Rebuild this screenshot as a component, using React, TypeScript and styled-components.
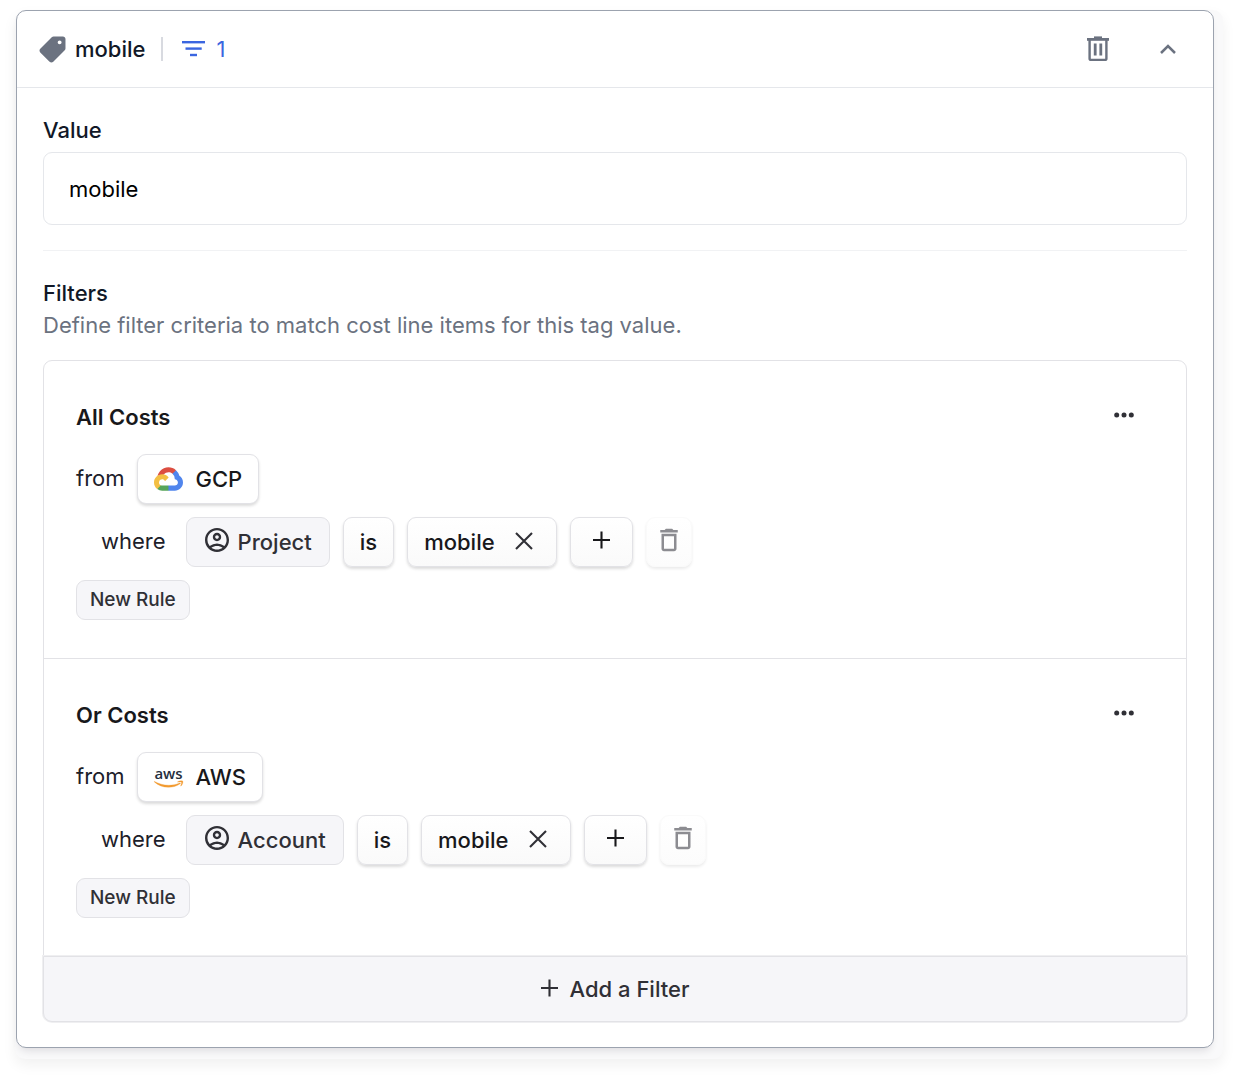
import React, { useState } from "react";
import styled, { createGlobalStyle, css } from "styled-components";

const GlobalStyle = createGlobalStyle`
  *, *::before, *::after { box-sizing: border-box; }
  body {
    margin: 0;
    background: #fff;
    font-family: Inter, "Liberation Sans", sans-serif;
    font-size: 22px;
    line-height: 32px;
    color: #1c2029;
  }
  button, input { font: inherit; color: inherit; }
  svg { display: block; flex: none; overflow: visible; }
`;

const Page = styled.main`
  padding: 10px 15px 20px;
`;

const Backdrop = styled.div`
  padding: 0 9px 11px 1px;
  border-radius: 10px;
  background: #f9f9fa;
  box-shadow: 0 6px 14px rgba(0, 0, 0, 0.06);
`;

const Card = styled.section`
  border: 1px solid #9ca3af;
  border-radius: 10px;
  background: #fff;
  box-shadow: 0 6px 8px -4px rgba(30, 20, 40, 0.14);
`;

const Header = styled.header`
  display: flex;
  align-items: center;
  height: 77px;
  padding: 0 37px 0 22px;
  border-bottom: 1px solid #e5e7eb;
  color: #6b7280;
`;

const HeaderTitle = styled.h2`
  margin: 0 16px 0 9px;
  font-size: inherit;
  font-weight: 500;
  color: #111827;
`;

const FilterCount = styled.span`
  display: flex;
  align-items: center;
  gap: 11px;
  height: 24px;
  padding-left: 19px;
  border-left: 2px solid #d8dae0;
  color: #3b66e0;
`;

const HeaderActions = styled.div`
  display: flex;
  gap: 51px;
  margin-left: auto;
`;

const PlainButton = styled.button`
  display: flex;
  align-items: center;
  justify-content: center;
  padding: 0;
  border: 0;
  background: none;
  cursor: pointer;
`;

const Body = styled.div`
  padding: 26px 26px 25px;
`;

const FieldLabel = styled.label`
  display: block;
  margin-bottom: 6px;
  font-weight: 500;
  color: #111827;
`;

const TextInput = styled.input`
  display: block;
  width: 100%;
  height: 73px;
  padding: 0 25px;
  border: 1px solid #e5e7eb;
  border-radius: 9px;
  background: #fff;
  color: #000;
  outline: 0;
`;

const Divider = styled.hr`
  margin: 25px 0 26px;
  border: 0;
  border-top: 1px solid #f1f2f4;
`;

const SectionTitle = styled.h3`
  margin: 0;
  font-size: inherit;
  font-weight: 500;
  color: #111827;
`;

const Description = styled.p`
  margin: 0 0 19px;
  color: #6b7280;
`;

const FilterBox = styled.div`
  border: 1px solid #e2e2e6;
  border-radius: 9px;
`;

const Group = styled.section`
  display: flex;
  flex-direction: column;
  align-items: flex-start;
  gap: 13px;
  padding: 40px 32px 38px;

  & + & {
    border-top: 1px solid #e2e2e6;
  }
`;

const GroupHeader = styled.div`
  display: flex;
  justify-content: space-between;
  align-items: flex-start;
  width: 100%;
  margin-bottom: 8px;
  padding-right: 20px;
`;

const MenuButton = styled(PlainButton)`
  height: 28px;
`;

const GroupTitle = styled.h4`
  margin: 0;
  font-size: inherit;
  font-weight: 600;
  color: #18181b;
`;

const RuleRow = styled.div<{ $indent?: boolean }>`
  display: flex;
  align-items: center;
  gap: ${(p) => (p.$indent ? 13 : 12)}px;
  padding-left: ${(p) => (p.$indent ? 25 : 0)}px;
`;

const Keyword = styled.span<{ $wide?: boolean }>`
  padding-bottom: 2px;
  margin-right: ${(p) => (p.$wide ? 7 : 0)}px;
`;

const variants = {
  source: css`
    background: #fff;
    border-color: #e2e2e6;
    box-shadow: 0 2px 3px rgba(0, 0, 0, 0.14);
    gap: 13px;
  `,
  muted: css`
    background: #f6f6f9;
    border-color: #e2e2e6;
    color: #303036;
    gap: 8px;
    padding: 0 17px;
  `,
  raised: css`
    background: linear-gradient(#fff, #fafafa);
    border-color: #e2e2e6;
    box-shadow: 0 2px 3px rgba(0, 0, 0, 0.14);
    gap: 19px;
  `,
  ghost: css`
    background: linear-gradient(#fff, #fcfcfc);
    border-color: #fafafa;
    box-shadow: 0 2px 3px rgba(0, 0, 0, 0.08);
    color: #8c8c91;
    padding: 0 7px;
  `,
};

const Chip = styled.button<{ $variant: keyof typeof variants }>`
  display: flex;
  align-items: center;
  height: 50px;
  padding: 0 16px;
  border: 1px solid;
  border-radius: 9px;
  font-weight: 500;
  color: #18181b;
  cursor: pointer;
  ${(p) => variants[p.$variant]}
`;

const ValueChip = styled(Chip)`
  padding-right: 22px;
`;

const AddValue = styled(Chip)`
  padding: 0 22px 2px;
`;

const RaisedIcon = styled.span`
  padding-bottom: 4px;
`;

const NewRule = styled.button`
  height: 40px;
  padding: 0 13px;
  border: 1px solid #e2e2e6;
  border-radius: 9px;
  background: #f6f6f9;
  font-size: 19px;
  font-weight: 500;
  color: #303036;
  cursor: pointer;
`;

const AddFilter = styled.button`
  display: flex;
  align-items: center;
  justify-content: center;
  gap: 12px;
  width: calc(100% + 2px);
  height: 66px;
  margin: 0 -1px -1px;
  border: 1px solid #e2e2e6;
  border-radius: 0 0 9px 9px;
  background: #f6f6f9;
  box-shadow: 0 0 0 1px #efeff1;
  font-weight: 500;
  color: #303036;
  cursor: pointer;
`;

const TagIcon = () => (
  <svg width="27" height="27" viewBox="1.6 1.6 20.8 20.8" fill="currentColor" aria-hidden="true">
    <path
      transform="matrix(-1 0 0 1 24 0)"
      d="M21.41 11.41l-8.83-8.83c-.37-.37-.88-.58-1.41-.58H4c-1.1 0-2 .9-2 2v7.17c0 .53.21 1.04.59 1.41l8.83 8.83c.78.78 2.05.78 2.83 0l7.17-7.17c.78-.78.78-2.04-.01-2.83zM6.5 8C5.67 8 5 7.33 5 6.5S5.67 5 6.5 5 8 5.67 8 6.5 7.33 8 6.5 8z"
    />
  </svg>
);

const FilterIcon = () => (
  <svg width="23" height="16" viewBox="0 0 23 16" fill="currentColor" aria-hidden="true">
    <rect width="23" height="2.4" />
    <rect x="3.5" y="6.4" width="16.2" height="2.4" />
    <rect x="8" y="12.8" width="7" height="2.4" />
  </svg>
);

const BinIcon = () => (
  <svg width="22" height="26" viewBox="0 0 22 26" fill="none" stroke="currentColor" strokeWidth="2.4" aria-hidden="true">
    <path d="M0 3.4h22" strokeWidth="2.8" />
    <path d="M7 1.6h8" />
    <path d="M2.6 4v18.4q0 1.5 1.5 1.5h13.8q1.5 0 1.5-1.5V4" />
    <path d="M8.2 7.6v12M13.8 7.6v12" strokeWidth="2.8" />
  </svg>
);

const ChevronUp = () => (
  <svg width="16" height="10" viewBox="0 0 16 10" fill="none" stroke="currentColor" strokeWidth="2.5" aria-hidden="true">
    <path d="M1 9l7-7 7 7" />
  </svg>
);

const DotsIcon = () => (
  <svg width="20" height="6" viewBox="0 0 20 6" fill="#303036" aria-hidden="true">
    <circle cx="2.7" cy="3" r="2.5" />
    <circle cx="10" cy="3" r="2.5" />
    <circle cx="17.3" cy="3" r="2.5" />
  </svg>
);

const UserIcon = () => (
  <svg width="26" height="30" viewBox="1.2 1.2 21.6 25" fill="currentColor" aria-hidden="true">
    <path d="M12 2C6.48 2 2 6.48 2 12s4.48 10 10 10 10-4.48 10-10S17.52 2 12 2zM7.35 18.5C8.66 17.56 10.26 17 12 17s3.34.56 4.65 1.5C15.34 19.44 13.74 20 12 20s-3.34-.56-4.65-1.5zm10.79-1.38a9.947 9.947 0 0 0-12.28 0A7.957 7.957 0 0 1 4 12c0-4.42 3.58-8 8-8s8 3.58 8 8c0 1.95-.7 3.73-1.86 5.12z" />
    <path d="M12 6c-1.93 0-3.5 1.57-3.5 3.5S10.07 13 12 13s3.5-1.57 3.5-3.5S13.93 6 12 6zm0 5c-.83 0-1.5-.67-1.5-1.5S11.17 8 12 8s1.5.67 1.5 1.5S12.83 11 12 11z" />
  </svg>
);

const CloseIcon = () => (
  <svg width="20" height="20" viewBox="-1 0 20 20" fill="none" stroke="#303036" strokeWidth="2.1" aria-hidden="true">
    <path d="M1 1l16 16M17 1L1 17" />
  </svg>
);

const PlusIcon = () => (
  <svg width="17" height="20" viewBox="0 0 17 20" fill="none" stroke="currentColor" strokeWidth="2.1" aria-hidden="true">
    <path d="M8.5 .5v17M0 9h17" />
  </svg>
);

const DeleteIcon = () => (
  <svg width="30" height="30" viewBox="0 0 24 24" fill="currentColor" aria-hidden="true">
    <path d="M6 19c0 1.1.9 2 2 2h8c1.1 0 2-.9 2-2V7H6v12zM8 9h8v10H8V9zm7.5-5l-1-1h-5l-1 1H5v2h14V4z" />
  </svg>
);

const GcpLogo = () => (
  <svg width="29" height="24" viewBox="0 0 256 206" aria-hidden="true">
    <path fill="#dc4e41" d="M170.252 56.819l22.253-22.253 1.483-9.37C153.437-11.677 88.976-7.496 52.42 33.92 42.267 45.423 34.734 59.764 30.717 74.573l7.97-1.123 44.505-7.34 3.436-3.513c19.797-21.742 53.27-24.667 76.128-6.168l7.496.39z" />
    <path fill="#5085ed" d="M224.205 73.918a100.249 100.249 0 0 0-30.217-48.722l-31.232 31.232a55.515 55.515 0 0 1 20.379 44.037v5.544c15.35 0 27.797 12.445 27.797 27.796 0 15.352-12.446 27.485-27.797 27.485h-55.671l-5.466 5.934v33.34l5.466 5.231h55.67c39.93.311 72.553-31.494 72.864-71.424a72.303 72.303 0 0 0-31.793-60.453z" />
    <path fill="#57a55a" d="M71.87 205.796h55.593V161.29H71.87a27.275 27.275 0 0 1-11.4-2.498l-7.887 2.42-22.409 22.253-1.952 7.652a72.182 72.182 0 0 0 43.648 14.679z" />
    <path fill="#f3bf43" d="M71.87 61.426C31.94 61.664-.237 94.228.001 134.158a72.301 72.301 0 0 0 28.222 56.88l32.248-32.246c-13.99-6.322-20.208-22.786-13.887-36.776 6.32-13.99 22.786-20.208 36.775-13.888a27.796 27.796 0 0 1 13.888 13.888l32.248-32.247A72.224 72.224 0 0 0 71.87 61.426z" />
  </svg>
);

const AwsLogo = () => (
  <svg width="29" height="20" viewBox="0 0 29 20" aria-hidden="true">
    <text x="14.5" y="12" textAnchor="middle" fontFamily="'Open Sans', 'Noto Sans', sans-serif" fontSize="15" fontWeight="600" fill="#252f3e">
      aws
    </text>
    <g fill="#f29a2e" stroke="#f29a2e" strokeWidth="3" transform="translate(0 3) scale(.0957)">
      <path d="M273.5 143.7c-32.9 24.3-80.7 37.2-121.8 37.2-57.6 0-109.5-21.3-148.7-56.7-3.1-2.8-.3-6.6 3.4-4.4 42.4 24.6 94.7 39.5 148.8 39.5 36.5 0 76.6-7.6 113.5-23.2 5.5-2.5 10.2 3.6 4.8 7.6z" />
      <path d="M287.2 128.1c-4.2-5.4-27.8-2.6-38.5-1.3-3.2.4-3.7-2.4-.8-4.5 18.8-13.2 49.7-9.4 53.3-5 3.6 4.5-1 35.4-18.6 50.2-2.7 2.3-5.3 1.1-4.1-1.9 4-9.9 12.9-32.2 8.7-37.5z" />
    </g>
  </svg>
);

type CostGroupProps = {
  title: string;
  provider: string;
  logo: React.ReactNode;
  field: string;
  value: string;
};

const CostGroup = ({ title, provider, logo, field, value }: CostGroupProps) => (
  <Group>
    <GroupHeader>
      <GroupTitle>{title}</GroupTitle>
      <MenuButton type="button" aria-label={`${title} options`}>
        <DotsIcon />
      </MenuButton>
    </GroupHeader>
    <RuleRow>
      <Keyword>from</Keyword>
      <Chip type="button" $variant="source">
        {logo}
        {provider}
      </Chip>
    </RuleRow>
    <RuleRow $indent>
      <Keyword $wide>where</Keyword>
      <Chip type="button" $variant="muted">
        <UserIcon />
        {field}
      </Chip>
      <Chip type="button" $variant="raised">is</Chip>
      <ValueChip as="div" $variant="raised">
        {value}
        <PlainButton type="button" aria-label={`Remove ${value}`}>
          <CloseIcon />
        </PlainButton>
      </ValueChip>
      <AddValue type="button" $variant="raised" aria-label="Add value">
        <PlusIcon />
      </AddValue>
      <Chip type="button" $variant="ghost" aria-label="Delete rule">
        <RaisedIcon><DeleteIcon /></RaisedIcon>
      </Chip>
    </RuleRow>
    <NewRule type="button">New Rule</NewRule>
  </Group>
);

export default function App() {
  const [value, setValue] = useState("mobile");
  return (
    <>
      <GlobalStyle />
      <Page>
        <Backdrop>
          <Card>
            <Header>
              <TagIcon />
              <HeaderTitle>mobile</HeaderTitle>
              <FilterCount>
                <FilterIcon />
                1
              </FilterCount>
              <HeaderActions>
                <PlainButton type="button" aria-label="Delete value">
                  <BinIcon />
                </PlainButton>
                <PlainButton type="button" aria-label="Collapse">
                  <ChevronUp />
                </PlainButton>
              </HeaderActions>
            </Header>
            <Body>
              <FieldLabel htmlFor="tag-value">Value</FieldLabel>
              <TextInput id="tag-value" value={value} onChange={(e) => setValue(e.target.value)} />
              <Divider />
              <SectionTitle>Filters</SectionTitle>
              <Description>Define filter criteria to match cost line items for this tag value.</Description>
              <FilterBox>
                <CostGroup title="All Costs" provider="GCP" logo={<GcpLogo />} field="Project" value="mobile" />
                <CostGroup title="Or Costs" provider="AWS" logo={<AwsLogo />} field="Account" value="mobile" />
                <AddFilter type="button">
                  <PlusIcon />
                  Add a Filter
                </AddFilter>
              </FilterBox>
            </Body>
          </Card>
        </Backdrop>
      </Page>
    </>
  );
}
